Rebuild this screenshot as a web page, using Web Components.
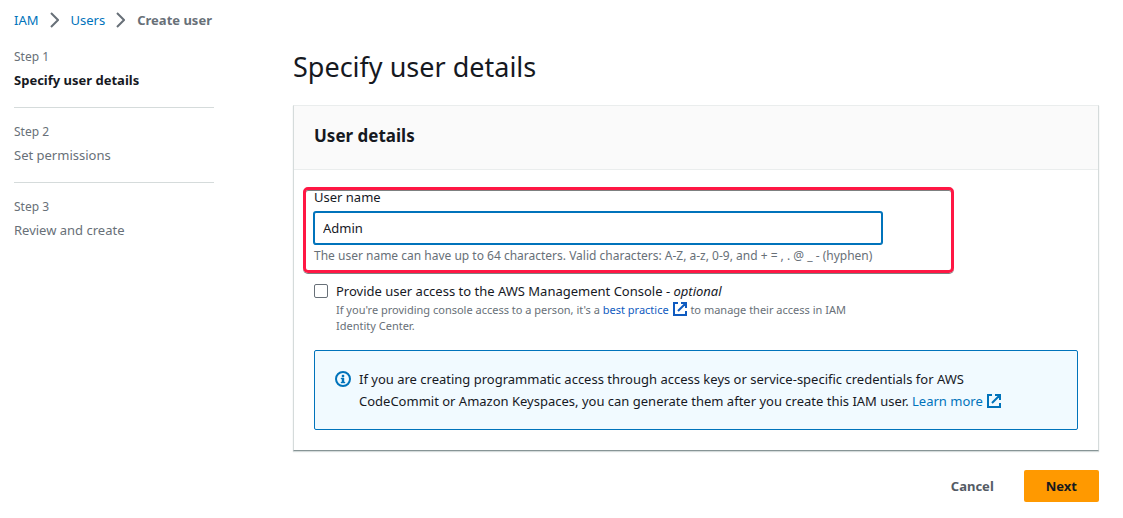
<!DOCTYPE html>
<html lang="en">
<head>
<meta charset="utf-8">
<title>Create user | IAM</title>
<style>
  body { margin: 0; background: #fff; color: #16191f; font: 13px/22px "Noto Sans", "Open Sans", sans-serif; }
</style>
</head>
<body>
<iam-page></iam-page>
<script>
const define = (name, html) => {
  const template = document.createElement('template');
  template.innerHTML = html;
  customElements.define(name, class extends HTMLElement {
    constructor() {
      super();
      this.attachShadow({ mode: 'open' }).append(template.content.cloneNode(true));
    }
  });
};

define('external-icon', `
  <style>
    :host { display: inline-block; width: 14px; height: 14px; vertical-align: -2px; margin: 0 1px; }
    svg { display: block; }
  </style>
  <svg width="14" height="14" viewBox="0 0 14 14" fill="none" stroke="currentColor" stroke-width="2" aria-hidden="true">
    <path d="M5 1H1v12h12V9M8 1h5v5M13 1 5 9"/>
  </svg>`);

define('info-icon', `
  <style>:host { display: block; color: #0073bb; } svg { display: block; }</style>
  <svg width="16" height="16" viewBox="0 0 16 16" fill="none" stroke="currentColor" aria-hidden="true">
    <circle cx="8" cy="8" r="7" stroke-width="2"/>
    <path d="M7 4h2v2H7zM6 7h3v4h1v1H6v-1h1V8H6z" fill="currentColor" stroke-width=".4"/>
  </svg>`);

define('crumb-trail', `
  <style>
    :host { display: block; }
    ol { display: flex; align-items: center; gap: 12px; margin: 0; padding: 0; list-style: none; }
    li { display: flex; align-items: center; gap: 11px; }
    a { color: #0073bb; text-decoration: none; }
    .here { color: #687078; font-weight: 700; }
    svg { display: block; }
  </style>
  <nav aria-label="Breadcrumbs"><ol>
    <li><a href="#iam">IAM</a><svg width="9" height="16" fill="none" stroke="#687078" stroke-width="2"><path d="M1 1l7 7-7 7"/></svg></li>
    <li><a href="#users">Users</a><svg width="9" height="16" fill="none" stroke="#687078" stroke-width="2"><path d="M1 1l7 7-7 7"/></svg></li>
    <li class="here" aria-current="page">Create user</li>
  </ol></nav>`);

define('wizard-step', `
  <style>
    :host { display: block; color: #687078; padding-bottom: 16px; margin-bottom: 13px; border-bottom: 1px solid #d5dbdb; }
    :host(:last-of-type) { border-bottom: 0; }
    :host([current]) .name { color: #16191f; font-weight: 700; }
    .number { font-size: 12px; line-height: 22px; }
    .name { padding-top: 1px; line-height: 22px; }
  </style>
  <div class="number"><slot name="number"></slot></div>
  <div class="name"><slot></slot></div>`);

define('text-field', `
  <style>
    :host { display: block; position: relative; width: calc(75% - 5px); }
    label { display: block; line-height: 22px; }
    input { display: block; box-sizing: border-box; width: 100%; height: 32px; margin: 4px 0; padding: 0 8px;
      border: 1px solid #0073bb; border-radius: 2px; box-shadow: 0 0 0 1px #0073bb; outline: 0;
      background: #fff; color: inherit; font: inherit; }
    p { margin: 0; color: #687078; font-size: 12px; line-height: 16px; }
    .marker { position: absolute; inset: 1px -72px -9px -11px; border: 3px solid #ff1744; border-radius: 5px;
      box-shadow: inset 0 1px 0 #7d8080, 0 1px 0 #7d8080; pointer-events: none; }
  </style>
  <label for="field">User name</label>
  <input id="field" type="text" value="Admin" aria-describedby="hint">
  <p id="hint">The user name can have up to 64 characters. Valid characters: A-Z, a-z, 0-9, and + = , . @ _ - (hyphen)</p>
  <div class="marker"></div>`);

define('check-field', `
  <style>
    :host { display: grid; grid-template-columns: 14px 1fr; column-gap: 8px; width: calc(75% - 5px); }
    input { appearance: none; box-sizing: border-box; width: 14px; height: 14px; margin: 4px 0 0; border: 1px solid #687078; border-radius: 2px; background: #fff; }
    label { line-height: 22px; }
    p { grid-column: 2; margin: 0; color: #687078; font-size: 11px; line-height: 16px; }
    a { color: #0f5bc0; text-decoration: none; }
  </style>
  <input id="access" type="checkbox" aria-describedby="detail">
  <label for="access">Provide user access to the AWS Management Console - <i>optional</i></label>
  <p id="detail"><span>If you're providing console access to a person, it's a</span> <a href="#practice">best practice <external-icon></external-icon></a> <span>to manage their access in IAM</span> <span>Identity Center.</span></p>`);

define('info-alert', `
  <style>
    :host { display: flex; gap: 8px; padding: 17px 48px 17px 20px; border: 1px solid #0073bb; border-radius: 2px; background: #f1faff; }
    info-icon { padding-top: 3px; }
    p { margin: 0; line-height: 22px; }
    a { color: #0073bb; text-decoration: none; }
  </style>
  <info-icon></info-icon>
  <p><span>If you are creating programmatic access through access keys or service-specific credentials for AWS</span> <span>CodeCommit or Amazon Keyspaces, you can generate them after you create this IAM user.</span> <a href="#more">Learn more <external-icon></external-icon></a></p>`);

define('content-card', `
  <style>
    :host { display: block; border: 1px solid #d5dbdb; border-top-color: #eaeded; border-bottom-color: #879596; box-shadow: 0 1px 1px #d5dbdb; background: #fff; }
    header { padding: 18px 20px 21px; border-bottom: 1px solid #eaeded; background: #fafafa; }
    .body { padding: 16px 20px 20px; }
  </style>
  <header><slot name="title"></slot></header>
  <div class="body"><slot></slot></div>`);

define('action-button', `
  <style>
    :host { display: block; }
    button { display: block; height: 32px; padding: 0 22px; border: 0; border-radius: 2px; background: transparent; color: #545b64; font: 700 13px/22px "Noto Sans", "Open Sans", sans-serif; }
    :host([primary]) button { background: #ff9900; color: #16191f; }
  </style>
  <button type="button"><slot></slot></button>`);

define('iam-page', `
  <style>
    :host { display: block; padding: 9px 24px 16px 14px; }
    .layout { display: grid; grid-template-columns: 200px minmax(0, 1fr); column-gap: 79px; padding-top: 15px; }
    h1 { margin: 3px 0 21px; font-size: 27px; font-weight: 400; line-height: 35px; }
    h2 { margin: 0; font-size: 17px; font-weight: 700; line-height: 24px; }
    check-field { margin: 16px 0; }
    .actions { display: flex; justify-content: flex-end; gap: 8px; margin-top: 19px; }
  </style>
  <crumb-trail></crumb-trail>
  <div class="layout">
    <aside aria-label="Steps">
      <wizard-step current><span slot="number">Step 1</span>Specify user details</wizard-step>
      <wizard-step><span slot="number">Step 2</span>Set permissions</wizard-step>
      <wizard-step><span slot="number">Step 3</span>Review and create</wizard-step>
    </aside>
    <main>
      <h1>Specify user details</h1>
      <content-card>
        <h2 slot="title">User details</h2>
        <text-field></text-field>
        <check-field></check-field>
        <info-alert></info-alert>
      </content-card>
      <div class="actions">
        <action-button>Cancel</action-button>
        <action-button primary>Next</action-button>
      </div>
    </main>
  </div>`);
</script>
</body>
</html>
